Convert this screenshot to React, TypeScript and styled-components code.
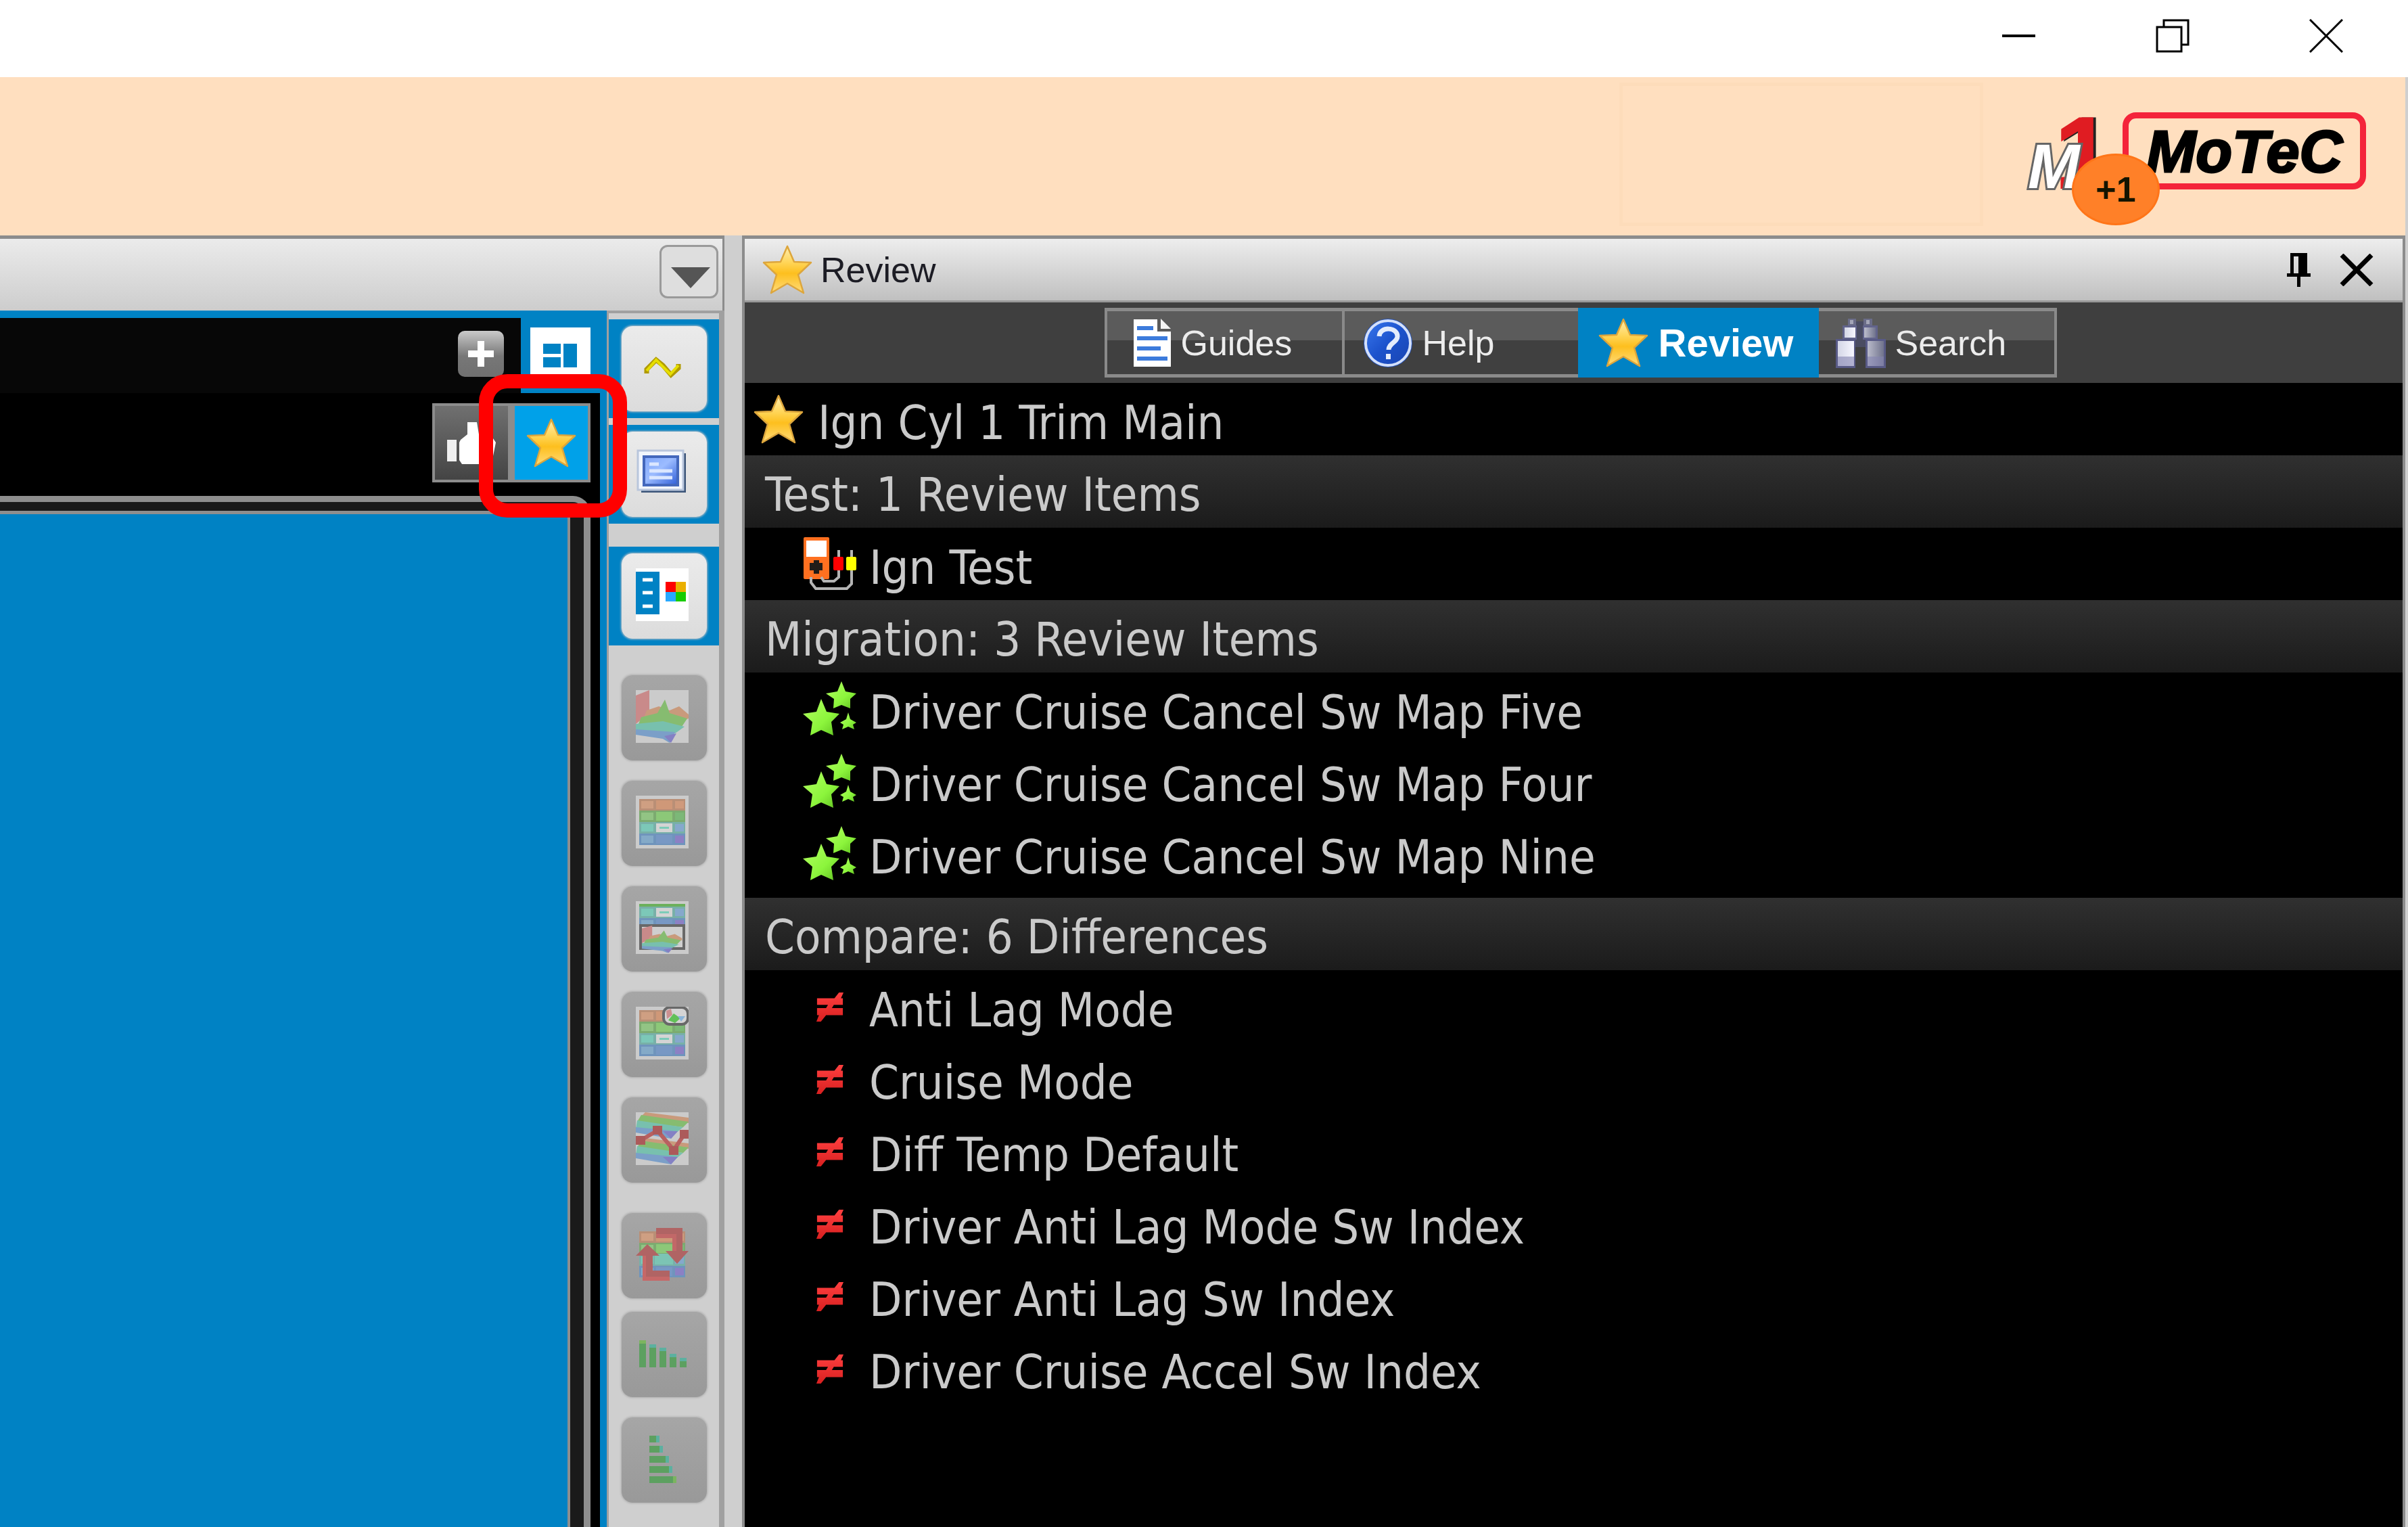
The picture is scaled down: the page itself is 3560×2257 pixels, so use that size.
import React from 'react';
import styled, { createGlobalStyle, css } from 'styled-components';

const BLUE = '#0082c4';
const UI_FONT = '"Liberation Sans", Arial, sans-serif';
const LIST_FONT = '"DejaVu Sans Condensed", "DejaVu Sans", Tahoma, sans-serif';

const GlobalStyle = createGlobalStyle`
  * { box-sizing: border-box; }
  body { margin: 0; background: #cfcfcf; font-family: ${UI_FONT}; }
  button { margin: 0; padding: 0; border: 0; background: none; font: inherit; color: inherit; }
  svg { display: block; flex: none; }
`;

const Window = styled.div`
  display: flex;
  flex-direction: column;
  height: 100vh;
  overflow: hidden;
`;

const TitleBar = styled.header`
  display: flex;
  justify-content: flex-end;
  align-items: center;
  gap: 75px;
  flex: none;
  height: 114px;
  padding: 0 45px 8px 0;
  background: #fff;
`;

const CaptionButton = styled.button`
  display: flex;
  align-items: center;
  justify-content: center;
  width: 152px;
  height: 80px;
`;

const Brand = styled.div`
  display: flex;
  align-items: flex-start;
  justify-content: flex-end;
  flex: none;
  height: 234px;
  margin-right: 4px;
  padding: 8px 58px 0 0;
  background: #ffdfbf;
`;

const BrandSlot = styled.div`
  width: 538px;
  height: 212px;
  margin-right: 48px;
  border: 5px solid #fddcba;
`;

const Logos = styled.div`
  position: relative;
  display: flex;
  align-items: flex-start;
  gap: 10px;
`;

const MotecFrame = styled.div`
  display: flex;
  align-items: center;
  justify-content: center;
  width: 360px;
  height: 114px;
  margin-top: 44px;
  padding-top: 2px;
  border: 9px solid #f4243a;
  border-radius: 20px;
  color: #000;
  font: italic bold 88px/94px ${UI_FONT};
  -webkit-text-stroke: 3px #000;
`;

const Badge = styled.span`
  position: absolute;
  left: 83px;
  top: 105px;
  display: flex;
  align-items: center;
  justify-content: center;
  width: 130px;
  height: 106px;
  border: 3px solid #ff7518;
  border-radius: 50%;
  background: #ff8028;
  color: #141400;
  font-weight: bold;
  font-size: 52px;
  line-height: 60px;
`;

const Workspace = styled.main`
  display: grid;
  grid-template-columns: minmax(0, 1071fr) minmax(0, 2459fr);
  column-gap: 26px;
  flex: 1;
  min-height: 0;
  margin-right: 4px;
  background: #cfcfcf;
`;

const EditorPanel = styled.section`
  display: flex;
  flex-direction: column;
  min-height: 0;
  border-top: 5px solid #8c8c8c;
`;

const EditorHeader = styled.div`
  display: flex;
  justify-content: flex-end;
  flex: none;
  height: 106px;
  padding: 9px 6px 0 0;
  border-right: 3px solid #8c8c8c;
  background: linear-gradient(#ebebeb, #cdcdcd);
`;

const DropButton = styled.button`
  display: flex;
  align-items: center;
  align-self: flex-start;
  justify-content: center;
  width: 87px;
  height: 79px;
  padding: 18px 0 0 4px;
  border: 3px solid #9a9a9a;
  border-radius: 12px;
  background: #dedede;
`;

const EditorBody = styled.div`
  display: flex;
  flex: 1;
  min-height: 0;
`;

const Canvas = styled.div`
  display: flex;
  flex-direction: column;
  flex: 1;
  min-width: 0;
  padding: 11px 10px 0 0;
  background: ${BLUE};
`;

const TabStrip = styled.div`
  display: flex;
  flex: none;
  height: 111px;
`;

const StripFill = styled.div`
  display: flex;
  justify-content: flex-end;
  flex: 1;
  padding: 19px 25px 0 0;
  background: #070707;
`;

const AddButton = styled.button`
  display: flex;
  align-items: center;
  justify-content: center;
  width: 68px;
  height: 68px;
  border-radius: 10px;
  background: linear-gradient(#cacaca, #777 55%, #707070);
`;

const LayoutTab = styled.button`
  display: flex;
  justify-content: center;
  align-items: flex-start;
  width: 117px;
  padding: 14px 0 0 0;
`;

const Sheet = styled.div`
  display: flex;
  flex-direction: column;
  flex: 1;
  min-height: 0;
  background: #000;
`;

const SheetTools = styled.div`
  display: flex;
  justify-content: flex-end;
  flex: none;
  height: 152px;
  padding: 15px 14px 0 0;
`;

const ToggleGroup = styled.div`
  display: flex;
  gap: 10px;
  height: 117px;
  border: 4px solid #8c8c8c;
  background: #8c8c8c;
`;

const Toggle = styled.button<{ $on?: boolean }>`
  position: relative;
  display: flex;
  align-items: center;
  justify-content: center;
  width: 108px;
  height: 109px;
  background: ${(p) => (p.$on ? '#00a1e9' : 'linear-gradient(#707070, #444)')};
`;

const Highlight = styled.span`
  position: absolute;
  inset: -47px -58px -56px -53px;
  z-index: 2;
  border: 21px solid #f00;
  border-radius: 42px;
  pointer-events: none;
`;

const Frame = styled.div`
  display: flex;
  flex: 1;
  margin-right: 14px;
  padding: 13px 20px 0 0;
  border: solid #8e8e8e;
  border-width: 9px 10px 0 0;
  border-top-right-radius: 26px;
  background: #1a1a1a;
`;

const FrameView = styled.div`
  flex: 1;
  border: solid #8e8e8e;
  border-width: 5px 4px 0 0;
  background: ${BLUE};
`;

const Toolbar = styled.nav`
  display: flex;
  flex-direction: column;
  flex: none;
  width: 174px;
  border: solid #a0a0a0;
  border-width: 4px 8px 0 3px;
  padding-top: 9px;
  background: #cfcfcf;
`;

const ToolSlot = styled.div<{ $active?: boolean; $gap?: number }>`
  display: flex;
  align-items: center;
  justify-content: center;
  flex: none;
  height: 146px;
  margin-bottom: ${(p) => p.$gap ?? 10}px;
  background: ${(p) => (p.$active ? BLUE : 'transparent')};
`;

const ToolButton = styled.button`
  display: flex;
  align-items: center;
  justify-content: center;
  width: 126px;
  height: 126px;
  padding: 0 6px 4px 0;
  border-radius: 16px;
  background: linear-gradient(#ebebeb, #dcdcdc);
  box-shadow: 0 0 3px 1px #b4bcc4;
  ${(p) =>
    p.disabled &&
    css`
      background: linear-gradient(#a6a6a6, #999);
      box-shadow: 0 0 3px 1px #adadad;
    `}
`;

const ReviewPanel = styled.section`
  display: flex;
  flex-direction: column;
  min-height: 0;
  border: solid #8c8c8c;
  border-width: 5px 4px 0 4px;
  background: #000;
`;

const PanelTitle = styled.div`
  display: flex;
  align-items: center;
  flex: none;
  height: 94px;
  padding: 0 43px 0 24px;
  border-bottom: 3px solid #999;
  background: linear-gradient(#ededed, #c0c0c0);
`;

const PanelName = styled.h1`
  flex: 1;
  margin: 0;
  padding-left: 10px;
  color: #1c1c24;
  font-weight: normal;
  font-size: 52px;
  line-height: 60px;
`;

const PanelButton = styled.button`
  display: flex;
  justify-content: center;
  width: 50px;
  margin-left: 35px;
`;

const TabBar = styled.div`
  display: flex;
  justify-content: center;
  flex: none;
  height: 119px;
  padding: 8px 0 0 20px;
  background: #3f3f3f;
`;

const Tabs = styled.div`
  display: grid;
  grid-template-columns: 351fr 349fr 356fr 352fr;
  width: 1408px;
  height: 103px;
`;

const Tab = styled.button<{ $on?: boolean; $last?: boolean; $indent: number }>`
  display: flex;
  align-items: center;
  gap: 13px;
  padding-left: ${(p) => p.$indent}px;
  color: #ececec;
  font-size: 52px;
  line-height: 60px;
  border: solid #8a8a8a;
  border-width: 5px ${(p) => (p.$last ? 4 : 0)}px 5px ${(p) => (p.$last ? 0 : 4)}px;
  background: linear-gradient(#5b5b5b 46%, #404040 46%);
  ${(p) =>
    p.$on &&
    css`
      border-color: ${BLUE};
      background: ${BLUE};
      color: #fff;
      font-weight: bold;
      font-size: 58px;
    `}
`;

const List = styled.div`
  display: flex;
  flex-direction: column;
  color: #cacaca;
  font: 70px/80px ${LIST_FONT};
`;

const GroupHeading = styled.h2<{ $spaced?: boolean }>`
  height: 107px;
  margin: ${(p) => (p.$spaced ? 12 : 0)}px 0 0;
  padding: 18px 0 0 30px;
  font: inherit;
  background: linear-gradient(#303030, #1b1b1b);
`;

const Items = styled.ul`
  margin: 0;
  padding: 0;
  list-style: none;
`;

const Item = styled.li<{ $root?: boolean }>`
  display: flex;
  align-items: center;
  height: 107px;
  padding-left: ${(p) => (p.$root ? 10 : 86)}px;
`;

const IconCell = styled.span`
  display: flex;
  justify-content: center;
  width: 80px;
  margin-right: 18px;
`;

const ItemText = styled.span`
  padding-top: 10px;
`;

const Star = () => (
  <svg width="78" height="78" viewBox="0 0 78 78">
    <defs>
      <linearGradient id="gold" x1="0" y1="0" x2="0" y2="1">
        <stop offset="0" stopColor="#ffedb0" />
        <stop offset=".35" stopColor="#ffd557" />
        <stop offset=".58" stopColor="#fdbf1e" />
        <stop offset="1" stopColor="#ffdc7c" />
      </linearGradient>
    </defs>
    <path
      d="M39 4L49 27 74 28 55 46 63 73 39 59 15 73 23 46 4 28 29 27Z"
      fill="url(#gold)"
      stroke="#dda63c"
      strokeWidth="2.5"
      strokeLinejoin="round"
    />
  </svg>
);

const GreenStars = () => (
  <svg width="80" height="82" viewBox="0 0 80 82">
    <defs>
      <linearGradient id="lime" x1="0" y1="0" x2="1" y2="1">
        <stop offset="0" stopColor="#b4ff62" />
        <stop offset=".6" stopColor="#8cf53c" />
        <stop offset="1" stopColor="#5fbf20" />
      </linearGradient>
    </defs>
    <g fill="url(#lime)">
      <path d="M27 26L35 45 54 48 42 60 45 80 27 72 11 80 14 60 0 48 20 45Z" />
      <path d="M57 0L63 15 79 18 70 26 70 40 57 35 45 40 46 26 34 18 51 15Z" />
      <path d="M67 46L70 56 79 61 74 64 76 71 67 67 58 71 60 64 55 61 64 56Z" />
    </g>
  </svg>
);

const Meter = () => (
  <svg width="80" height="82" viewBox="0 0 80 82">
    <rect x="1" y="1" width="38" height="62" rx="2" fill="#ff7020" />
    <path
      d="M12 60V68L19 77H65L72 70V20M27 60L31 66H46L53 60V20"
      fill="none"
      stroke="#b4b4b4"
      strokeWidth="4"
    />
    <rect x="5" y="6" width="30" height="24" fill="#fff" />
    <path d="M16 35H24V39H29V50H24V55H16V50H10V39H16Z" fill="#221c18" />
    <rect x="45" y="30" width="15" height="20" rx="2" fill="#f00" />
    <rect x="64" y="30" width="15" height="20" rx="2" fill="#ff0" />
  </svg>
);

const NotEqual = () => (
  <svg width="42" height="46" viewBox="0 0 44 46">
    <defs>
      <linearGradient id="ne" x1="0" y1="0" x2="0" y2="1">
        <stop offset="0" stopColor="#ff4040" />
        <stop offset="1" stopColor="#d82020" />
      </linearGradient>
    </defs>
    <path
      d="M2 10H29L36 1 43 1 39 10H42V20H28L25 25H42V36H16L8 46H1L5 36H2V25H16L19 20H2Z"
      fill="url(#ne)"
    />
  </svg>
);

const GuideIcon = () => (
  <svg width="58" height="72" viewBox="0 0 58 72">
    <path d="M1 1H36V19H56V71H1Z" fill="#fff" />
    <path d="M41 0L56 15H41Z" fill="#f4f4f4" />
    <path d="M6 14H30M6 29H51M6 44H41M6 59H51" stroke="#3c7bdc" strokeWidth="6" />
  </svg>
);

const HelpIcon = () => (
  <svg width="76" height="76" viewBox="0 0 76 76">
    <defs>
      <linearGradient id="help" x1="0" y1="0" x2="1" y2="1">
        <stop offset="0" stopColor="#3a78ee" />
        <stop offset=".5" stopColor="#1c52cc" />
        <stop offset="1" stopColor="#1a44b0" />
      </linearGradient>
    </defs>
    <circle cx="38" cy="38" r="36" fill="#2350b4" />
    <circle cx="38" cy="38" r="33" fill="url(#help)" stroke="#d4e0fa" strokeWidth="4" />
    <path d="M25 28C26 13 52 14 52 28C52 37 39 38 39 48" fill="none" stroke="#e4ecfc" strokeWidth="7" />
    <path d="M35 54H42V62H35Z" fill="#e4ecfc" />
  </svg>
);

const Binoculars = () => (
  <svg width="76" height="76" viewBox="0 0 76 76">
    <defs>
      <linearGradient id="barrel" x1="0" y1="0" x2="1" y2="0">
        <stop offset="0" stopColor="#d4d6e6" />
        <stop offset=".35" stopColor="#f6f6ff" />
        <stop offset="1" stopColor="#70738c" />
      </linearGradient>
    </defs>
    <path d="M29 6H45V44H29Z" fill="#4a4c62" />
    <path d="M19 2H31V13H19ZM42 2H55V13H42Z" fill="#6a6c88" />
    <path d="M22 4H27V10H22ZM46 4H51V10H46Z" fill="#a4a6b8" />
    <path d="M11 12H32V33H11ZM41 12H63V33H41Z" fill="#62648c" />
    <path d="M14 15H30V30H14ZM43 15H60V30H43Z" fill="url(#barrel)" />
    <path d="M1 32H30V75H1ZM45 32H75V75H45Z" fill="#585a86" />
    <path d="M4 35H28V72H4ZM48 35H72V72H48Z" fill="url(#barrel)" />
    <path d="M4 58H28V72H4ZM48 58H72V72H48Z" fill="#8484b0" opacity=".6" />
  </svg>
);

const ThumbUp = () => (
  <svg width="76" height="70" viewBox="0 0 76 70">
    <path d="M2 30H16V62H2Z" fill="#f0f0f0" />
    <path d="M22 30L32 22V4H46L50 28H70L74 34 70 54 60 66H24L20 60V34Z" fill="#fff" />
  </svg>
);

const heatRows = [
  { base: '#b98f76', cells: ['#cf9f82', '#cf9878', '#cf9a7c'] },
  { base: '#7cab70', cells: ['#92c484', '#8cc878', '#7cb878'] },
  { base: '#78b0a8', cells: ['#7cc8b8', '#d4d4d4', '#86a8cc'] },
  { base: '#6f94bc', cells: ['#84aac8', '#7898c4', '#8c80c4'] },
];

const HeatTable = ({ y = 5, rows = 4 }: { y?: number; rows?: number }) => {
  const shown = rows === 2 ? heatRows.slice(2) : heatRows;
  const cursorY = y + (rows - 2) * 17;
  return (
    <g>
      {shown.map((r, i) => (
        <g key={r.base}>
          <rect x="5" y={y + i * 17} width="68" height="17" fill={r.base} />
          <rect x="8" y={y + i * 17 + 3} width="18" height="11" fill={r.cells[0]} />
          <rect x="30" y={y + i * 17 + 2} width="24" height="13" fill={r.cells[1]} />
          <rect x="58" y={y + i * 17 + 3} width="13" height="11" fill={r.cells[2]} />
        </g>
      ))}
      <rect x="35" y={cursorY + 7} width="14" height="3" fill="#7cccb8" />
    </g>
  );
};

const Surface = () => (
  <g>
    <path d="M0 8L20 0V34L0 50Z" fill="#c98a8a" />
    <path d="M16 30L34 24 50 30 64 24 78 36V42L60 48 12 40Z" fill="#c99a7c" />
    <path d="M8 40L32 34 43 14 50 34 76 42 68 54 4 50Z" fill="#86bc70" />
    <path d="M0 50L40 46 72 54 58 64 0 60Z" fill="#78c0ae" />
    <path d="M0 58L58 62 50 78 40 72 0 66Z" fill="#7b9fc8" />
    <path d="M42 68L60 64 52 78Z" fill="#8480c4" />
  </g>
);

const ToolIcon = ({ children, bg = '#cbcbcb' }: { children: React.ReactNode; bg?: string }) => (
  <svg width="78" height="78" viewBox="0 0 78 78">
    <rect width="78" height="78" fill={bg} />
    {children}
  </svg>
);

const Wave = () => (
  <ToolIcon bg="none">
    <path d="M16 48V42L30 28 40 36 52 50 63 40V34" fill="none" stroke="#b09a00" strokeWidth="7" />
    <path d="M16 44L30 28 38 36 51 49 63 36" fill="none" stroke="#e6de00" strokeWidth="4" />
  </ToolIcon>
);

const Screen = () => (
  <ToolIcon bg="none">
    <defs>
      <linearGradient id="scr" x1="0" y1="0" x2="1" y2="1">
        <stop offset="0" stopColor="#7fa6fa" />
        <stop offset=".45" stopColor="#9cbcff" />
        <stop offset="1" stopColor="#2c5cd8" />
      </linearGradient>
    </defs>
    <path d="M8 10H74V68H8Z" fill="#3b5478" />
    <path d="M3 6H70V64H3Z" fill="#f2f6fc" stroke="#b9c6dc" strokeWidth="3" />
    <path d="M12 15H62V57H12Z" fill="url(#scr)" stroke="#4468bc" strokeWidth="4" />
    <path d="M20 26H34M20 36H54M20 46H54" stroke="#dbe7ff" strokeWidth="5" />
  </ToolIcon>
);

const ListColors = () => (
  <ToolIcon bg="#fff">
    <rect x="0" y="5" width="35" height="63" fill={BLUE} />
    <path d="M10 17H25M10 36H25M10 56H25" stroke="#fff" strokeWidth="5" />
    <rect x="44" y="20" width="15" height="15" fill="#f00" />
    <rect x="59" y="20" width="15" height="15" fill="#eab000" />
    <rect x="44" y="35" width="15" height="14" fill="#28a8ff" />
    <rect x="59" y="35" width="15" height="14" fill="#18cc00" />
  </ToolIcon>
);

const SurfaceIcon = () => (
  <ToolIcon>
    <Surface />
  </ToolIcon>
);

const TableIcon = () => (
  <ToolIcon>
    <HeatTable />
  </ToolIcon>
);

const SplitIcon = () => (
  <ToolIcon>
    <rect x="5" y="4" width="68" height="4" fill="#6cb05c" />
    <HeatTable y={8} rows={2} />
    <rect x="7" y="36" width="64" height="34" fill="#cfcfcf" stroke="#686868" strokeWidth="4" />
    <g transform="translate(9 36) scale(.76 .52)">
      <Surface />
    </g>
  </ToolIcon>
);

const TableBadgeIcon = () => (
  <ToolIcon>
    <HeatTable />
    <rect x="41" y="1" width="36" height="25" rx="9" fill="#d4d4d4" stroke="#686868" strokeWidth="4" />
    <path d="M45 6L52 3 54 12 46 18Z" fill="#cc9090" />
    <path d="M48 20L56 10 66 17 58 24Z" fill="#62c058" />
    <path d="M62 14L73 14 67 22Z" fill="#8ab4d8" />
  </ToolIcon>
);

const TraceIcon = () => (
  <ToolIcon>
    {[0, 38].map((dy) => (
      <g key={dy} transform={`translate(0 ${dy})`}>
        <path d="M14 0L78 8V16L8 6Z" fill="#c99a7c" />
        <path d="M8 4L78 14 70 22 2 14Z" fill="#86bc70" />
        <path d="M2 12L70 22 60 30 0 24Z" fill="#78c0ae" />
        <path d="M0 22L62 28 52 39 0 30Z" fill="#7b9fc8" />
        <path d="M40 28L62 28 52 39Z" fill="#8480c4" />
      </g>
    ))}
    <path d="M8 41L32 27 56 56 72 32" fill="none" stroke="#b86060" strokeWidth="6" />
    <path d="M0 35H14V48H0ZM25 20H39V33H25ZM49 50H63V63H49ZM65 26H78V39H65Z" fill="#ac5a5a" />
  </ToolIcon>
);

const SwapIcon = () => (
  <ToolIcon bg="none">
    <HeatTable />
    <rect x="28" y="38" width="27" height="16" fill="#7cc4b4" />
    <path d="M30 0H69V34H78L61 53 44 34H54V15H30Z" fill="#b06464" />
    <path d="M30 9H60V34H54V15H30Z" fill="#c26868" />
    <path d="M17 24L35 41H25V63H50V78H10V41H0Z" fill="#b06464" />
    <path d="M10 41H15V72H50V78H10Z" fill="#c66868" />
  </ToolIcon>
);

const BarsDown = () => (
  <ToolIcon bg="none">
    {[40, 34, 29, 20, 14].map((h, i) => (
      <g key={h}>
        <rect x={5 + i * 15} y={60 - h} width="10" height={h} fill="#5ca060" />
        <rect x={5 + i * 15} y={60 - h} width="10" height="5" fill={i ? '#5cb0a0' : '#7cb460'} />
      </g>
    ))}
  </ToolIcon>
);

const BarsUp = () => (
  <ToolIcon bg="none">
    {[15, 20, 29, 34, 40].map((w, i) => (
      <g key={w}>
        <rect x="20" y={5 + i * 15} width={w} height="10" fill="#5ca060" />
        <rect x={15 + w} y={5 + i * 15} width="5" height="10" fill={i < 4 ? '#5cb0a0' : '#7cb460'} />
      </g>
    ))}
  </ToolIcon>
);

const M1Logo = () => (
  <svg
    width="148"
    height="210"
    viewBox="-16 -44 148 210"
    fontFamily="Liberation Sans, sans-serif"
    fontWeight="bold"
    paintOrder="stroke"
  >
    <defs>
      <filter id="edge" x="-10%" y="-10%" width="130%" height="120%">
        <feDropShadow dx="4" dy="0" stdDeviation="0" floodColor="#222" />
      </filter>
    </defs>
    <text x="42" y="112" fontSize="150" fill="#e01c24" stroke="#e01c24" strokeWidth="2" filter="url(#edge)">
      1
    </text>
    <text x="2" y="112" fontSize="92" fontStyle="italic" fill="#fff" stroke="#666" strokeWidth="6">
      M
    </text>
  </svg>
);

const tools: { label: string; icon: React.ReactNode; active?: boolean; gap?: number }[] = [
  { label: 'Channel graph', icon: <Wave />, active: true },
  { label: 'Notes', icon: <Screen />, active: true, gap: 34 },
  { label: 'Properties', icon: <ListColors />, active: true, gap: 34 },
  { label: 'Surface view', icon: <SurfaceIcon /> },
  { label: 'Table view', icon: <TableIcon /> },
  { label: 'Table and surface', icon: <SplitIcon /> },
  { label: 'Table with preview', icon: <TableBadgeIcon /> },
  { label: 'Trace view', icon: <TraceIcon />, gap: 25 },
  { label: 'Swap axes', icon: <SwapIcon />, gap: 0 },
  { label: 'Column bars', icon: <BarsDown /> },
  { label: 'Row bars', icon: <BarsUp /> },
];

const groups = [
  { title: 'Test: 1 Review Items', icon: <Meter />, items: ['Ign Test'] },
  {
    title: 'Migration: 3 Review Items',
    icon: <GreenStars />,
    items: ['Driver Cruise Cancel Sw Map Five', 'Driver Cruise Cancel Sw Map Four', 'Driver Cruise Cancel Sw Map Nine'],
  },
  {
    title: 'Compare: 6 Differences',
    icon: <NotEqual />,
    spaced: true,
    items: [
      'Anti Lag Mode',
      'Cruise Mode',
      'Diff Temp Default',
      'Driver Anti Lag Mode Sw Index',
      'Driver Anti Lag Sw Index',
      'Driver Cruise Accel Sw Index',
    ],
  },
];

export default function App() {
  return (
    <Window>
      <GlobalStyle />
      <TitleBar>
        <CaptionButton aria-label="Minimize">
          <svg width="50" height="50" viewBox="0 0 50 50">
            <path d="M0 25H49" stroke="#000" strokeWidth="4" />
          </svg>
        </CaptionButton>
        <CaptionButton aria-label="Restore">
          <svg width="50" height="50" viewBox="0 0 50 50" fill="none" stroke="#000" strokeWidth="3">
            <path d="M2 12H38V48H2ZM12 11V2H48V38H39" />
          </svg>
        </CaptionButton>
        <CaptionButton aria-label="Close">
          <svg width="50" height="50" viewBox="0 0 50 50">
            <path d="M1 1L49 49M49 1L1 49" stroke="#000" strokeWidth="3" />
          </svg>
        </CaptionButton>
      </TitleBar>

      <Brand>
        <BrandSlot />
        <Logos>
          <M1Logo />
          <MotecFrame>MoTeC</MotecFrame>
          <Badge>+1</Badge>
        </Logos>
      </Brand>

      <Workspace>
        <EditorPanel>
          <EditorHeader>
            <DropButton aria-label="Panel menu">
              <svg width="58" height="32" viewBox="0 0 58 32">
                <path d="M0 0H58L29 31Z" fill="#555" />
              </svg>
            </DropButton>
          </EditorHeader>
          <EditorBody>
            <Canvas>
              <TabStrip>
                <StripFill>
                  <AddButton aria-label="Add">
                    <svg width="40" height="40" viewBox="0 0 40 40">
                      <path d="M15 1H25V15H39V25H25V39H15V25H1V15H15Z" fill="#fff" />
                    </svg>
                  </AddButton>
                </StripFill>
                <LayoutTab aria-label="Layout">
                  <svg width="89" height="84" viewBox="0 0 89 84">
                    <rect width="89" height="84" fill="#fff" />
                    <path d="M19 24H45V39H19ZM19 44H45V59H19ZM49 24H69V59H49Z" fill={BLUE} />
                  </svg>
                </LayoutTab>
              </TabStrip>
              <Sheet>
                <SheetTools>
                  <ToggleGroup>
                    <Toggle aria-label="Like">
                      <ThumbUp />
                    </Toggle>
                    <Toggle $on aria-label="Add to review">
                      <Star />
                      <Highlight />
                    </Toggle>
                  </ToggleGroup>
                </SheetTools>
                <Frame>
                  <FrameView />
                </Frame>
              </Sheet>
            </Canvas>
            <Toolbar aria-label="Views">
              {tools.map((t) => (
                <ToolSlot key={t.label} $active={t.active} $gap={t.gap}>
                  <ToolButton aria-label={t.label} disabled={!t.active}>
                    {t.icon}
                  </ToolButton>
                </ToolSlot>
              ))}
            </Toolbar>
          </EditorBody>
        </EditorPanel>

        <ReviewPanel>
          <PanelTitle>
            <Star />
            <PanelName>Review</PanelName>
            <PanelButton aria-label="Pin">
              <svg width="36" height="50" viewBox="0 0 36 50">
                <path d="M5 0H30V30H35V35H20V50H15V35H0V30H5ZM10 5V30H17V5Z" fill="#000" fillRule="evenodd" />
              </svg>
            </PanelButton>
            <PanelButton aria-label="Close panel">
              <svg width="50" height="48" viewBox="0 0 50 48">
                <path d="M3 2L47 46M47 2L3 46" stroke="#000" strokeWidth="7" />
              </svg>
            </PanelButton>
          </PanelTitle>
          <TabBar>
            <Tabs>
              <Tab $indent={38}>
                <GuideIcon />
                Guides
              </Tab>
              <Tab $indent={26}>
                <HelpIcon />
                Help
              </Tab>
              <Tab $on $indent={24}>
                <Star />
                Review
              </Tab>
              <Tab $last $indent={24}>
                <Binoculars />
                Search
              </Tab>
            </Tabs>
          </TabBar>
          <List>
            <Items>
              <Item $root>
                <IconCell>
                  <Star />
                </IconCell>
                <ItemText>Ign Cyl 1 Trim Main</ItemText>
              </Item>
            </Items>
            {groups.map((g) => (
              <React.Fragment key={g.title}>
                <GroupHeading $spaced={g.spaced}>{g.title}</GroupHeading>
                <Items>
                  {g.items.map((name) => (
                    <Item key={name}>
                      <IconCell>{g.icon}</IconCell>
                      <ItemText>{name}</ItemText>
                    </Item>
                  ))}
                </Items>
              </React.Fragment>
            ))}
          </List>
        </ReviewPanel>
      </Workspace>
    </Window>
  );
}
